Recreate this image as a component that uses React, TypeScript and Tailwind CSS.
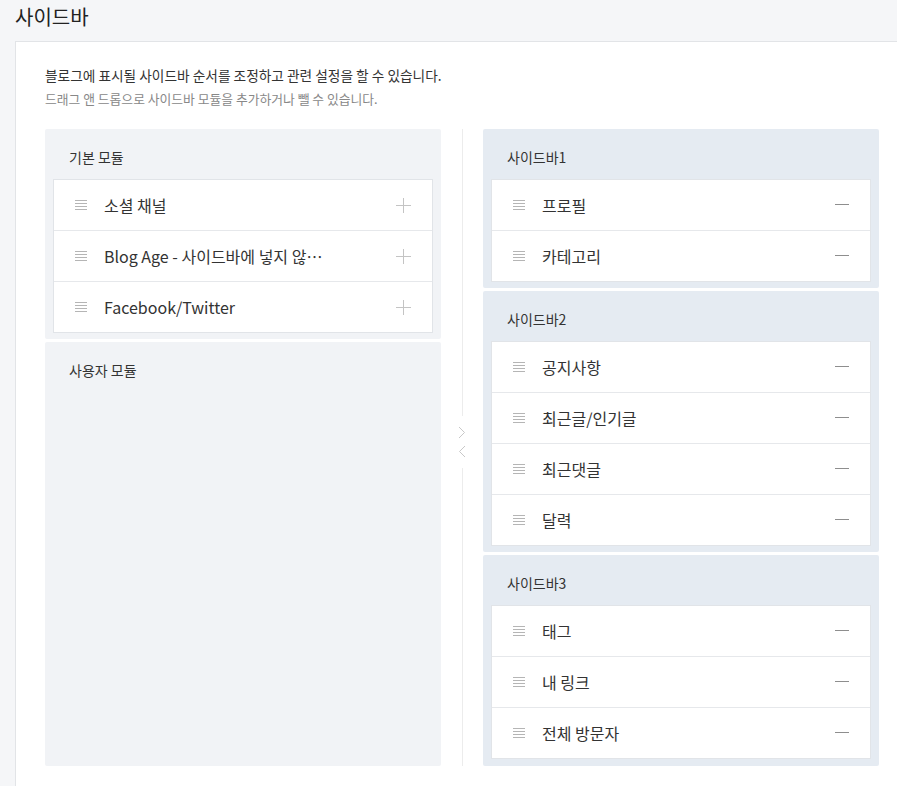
import React from "react";

const font = { fontFamily: '"Noto Sans CJK KR", "Noto Sans", sans-serif' };

function DragIcon() {
  return (
    <svg width="12" height="10" viewBox="0 0 12 10" className="shrink-0">
      <rect x="0" y="0" width="12" height="1" fill="#b5b5b5" />
      <rect x="0" y="3" width="12" height="1" fill="#b5b5b5" />
      <rect x="0" y="6" width="12" height="1" fill="#b5b5b5" />
      <rect x="0" y="9" width="12" height="1" fill="#b5b5b5" />
    </svg>
  );
}

function PlusIcon() {
  return (
    <svg width="15" height="15" viewBox="0 0 15 15" className="shrink-0">
      <rect x="7" y="0" width="1" height="15" fill="#c4c4c4" />
      <rect x="0" y="7" width="15" height="1" fill="#c4c4c4" />
    </svg>
  );
}

function MinusIcon() {
  return (
    <svg width="14" height="2" viewBox="0 0 14 2" className="shrink-0">
      <rect x="0" y="0" width="14" height="1" fill="#8e8e8e" />
    </svg>
  );
}

function Item({ label, add }: { label: string; add?: boolean }) {
  return (
    <div className="box-content flex h-[50px] items-center pl-[21px] pr-[21px] border-t border-[#e6e8eb] first:border-t-0">
      <DragIcon />
      <span className="ml-[17px] flex-1 text-[16px] text-[#333] whitespace-nowrap">{label}</span>
      {add ? <PlusIcon /> : <MinusIcon />}
    </div>
  );
}

function Panel({
  title,
  items,
  add,
  bg,
  grow,
}: {
  title: string;
  items: string[];
  add?: boolean;
  bg: string;
  grow?: boolean;
}) {
  return (
    <div className={`${bg} rounded-[2px] px-[8px] pb-[6px] ${grow ? "flex-1" : ""}`}>
      <div className="h-[50px] pl-[16px] pt-[18px] text-[14px] leading-[20px] text-[#333]">{title}</div>
      {items.length > 0 && (
        <div className="bg-white border border-[#e1e4e8]">
          {items.map((it) => (
            <Item key={it} label={it} add={add} />
          ))}
        </div>
      )}
    </div>
  );
}

export default function App() {
  return (
    <div className="w-[897px] h-[786px] overflow-hidden bg-[#f5f6f8]" style={font}>
      <div className="h-[41px] pl-[15px] flex items-center text-[20px] text-[#222] pb-[8px]">사이드바</div>
      <div className="ml-[15px] h-[745px] bg-white border-l border-t border-[#e2e4e7] pt-[22px] pl-[29px]">
        <p className="text-[13.7px] leading-[23px] text-[#333] whitespace-nowrap">
          블로그에 표시될 사이드바 순서를 조정하고 관련 설정을 할 수 있습니다.
        </p>
        <p className="text-[12.8px] leading-[23px] text-[#888] whitespace-nowrap">
          드래그 앤 드롭으로 사이드바 모듈을 추가하거나 뺄 수 있습니다.
        </p>
        <div className="mt-[19px] flex h-[637px]">
          <div className="w-[396px] flex flex-col gap-[3px]">
            <Panel
              title="기본 모듈"
              items={["소셜 채널", "Blog Age - 사이드바에 넣지 않…", "Facebook/Twitter"]}
              add
              bg="bg-[#f1f3f6]"
            />
            <Panel title="사용자 모듈" items={[]} bg="bg-[#f1f3f6]" grow />
          </div>
          <div className="w-[42px] flex flex-col items-center">
            <div className="w-px h-[287px] bg-[#ececec]" />
            <div className="flex flex-col items-center gap-[6px] py-[10px]">
              <svg width="8" height="13" viewBox="0 0 8 13">
                <path d="M1 1 L6.5 6.5 L1 12" fill="none" stroke="#c8c8c8" strokeWidth="1" />
              </svg>
              <svg width="8" height="13" viewBox="0 0 8 13">
                <path d="M7 1 L1.5 6.5 L7 12" fill="none" stroke="#c8c8c8" strokeWidth="1" />
              </svg>
            </div>
            <div className="w-px flex-1 bg-[#ececec]" />
          </div>
          <div className="w-[396px] flex flex-col gap-[3px]">
            <Panel title="사이드바1" items={["프로필", "카테고리"]} bg="bg-[#e5ebf2]" />
            <Panel
              title="사이드바2"
              items={["공지사항", "최근글/인기글", "최근댓글", "달력"]}
              bg="bg-[#e5ebf2]"
            />
            <Panel title="사이드바3" items={["태그", "내 링크", "전체 방문자"]} bg="bg-[#e5ebf2]" grow />
          </div>
        </div>
      </div>
    </div>
  );
}
